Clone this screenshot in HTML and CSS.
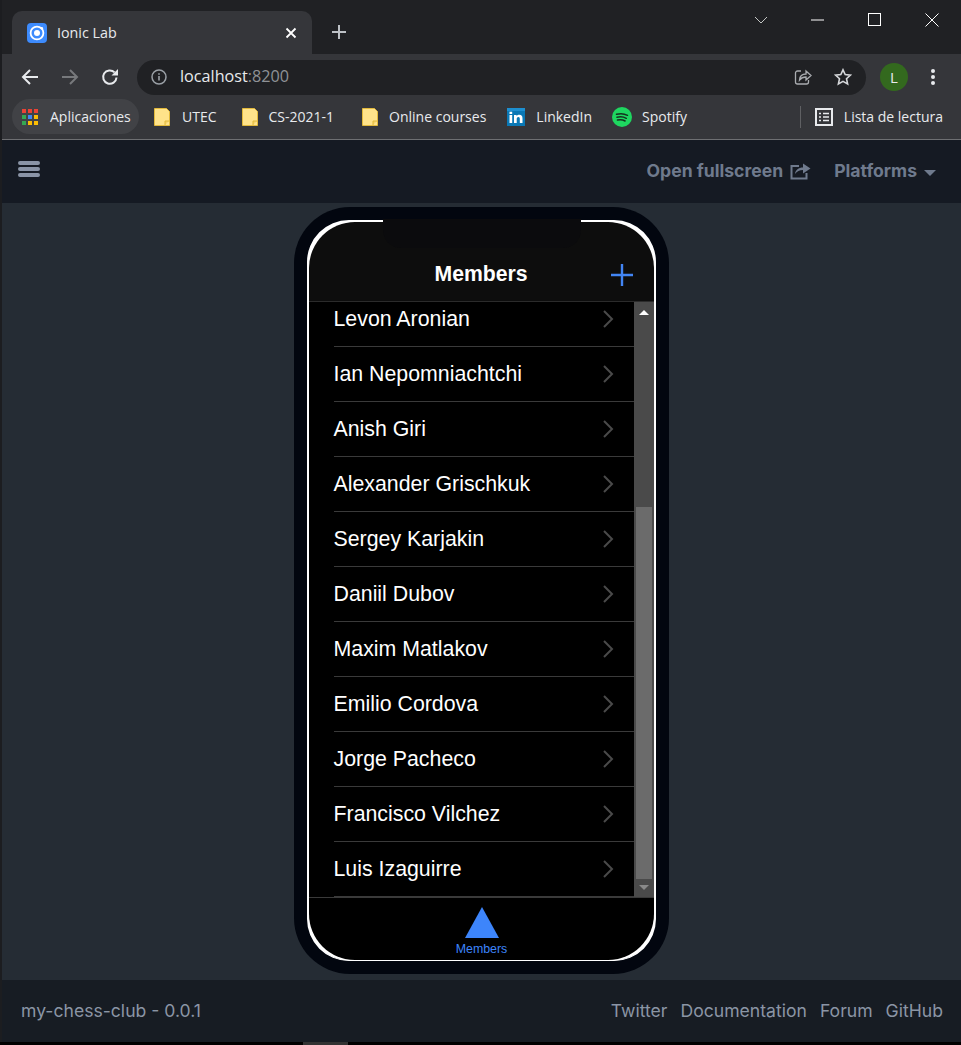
FILE: index.html
```html
<!DOCTYPE html>
<html lang="es">
<head>
    <meta charset="UTF-8">
    <title>Ionic Lab</title>
    <link rel="stylesheet" href="styles.css">
</head>
<body>
    <div class="tabstrip">
        <div class="tab">
            <svg class="favicon" width="20" height="20" viewBox="0 0 20 20">
                <rect width="20" height="20" rx="4" fill="#3d8bfd"/>
                <circle cx="10" cy="10" r="6.4" fill="none" stroke="#fff" stroke-width="1.8"/>
                <circle cx="10" cy="10" r="3" fill="#fff"/>
                <circle cx="14.8" cy="5.2" r="1.3" fill="#fff"/>
            </svg>
            <span class="tab-title">Ionic Lab</span>
            <svg class="tab-close" width="12" height="12" viewBox="0 0 12 12"><path d="M1.5 1.5l9 9M10.5 1.5l-9 9" stroke="#fff" stroke-width="1.8"/></svg>
        </div>
        <svg class="new-tab" width="16" height="16" viewBox="0 0 16 16"><path d="M8 1v14M1 8h14" stroke="#bdc1c6" stroke-width="2"/></svg>
        <div class="window-controls">
            <svg class="win-btn" width="14" height="14" viewBox="0 0 14 14"><path d="M1 4l6 6 6-6" fill="none" stroke="#c4c7c5" stroke-width="1"/></svg>
            <svg class="win-btn" width="14" height="14" viewBox="0 0 14 14"><path d="M0 7h13" stroke="#fff" stroke-width="1"/></svg>
            <svg class="win-btn" width="14" height="14" viewBox="0 0 14 14"><rect x="0.5" y="0.5" width="12" height="12" fill="none" stroke="#fff" stroke-width="1"/></svg>
            <svg class="win-btn" width="14" height="14" viewBox="0 0 14 14"><path d="M0.5 0.5l13 13M13.5 0.5l-13 13" stroke="#fff" stroke-width="1"/></svg>
        </div>
    </div>

    <div class="toolbar">
        <button class="nav-btn">
            <svg width="18" height="18" viewBox="0 0 18 18"><path d="M17 9H2M9 2L2 9l7 7" fill="none" stroke="#e8eaed" stroke-width="2"/></svg>
        </button>
        <button class="nav-btn">
            <svg width="18" height="18" viewBox="0 0 18 18"><path d="M1 9h15M9 2l7 7-7 7" fill="none" stroke="#77797c" stroke-width="2"/></svg>
        </button>
        <button class="nav-btn">
            <svg width="18" height="18" viewBox="0 0 18 18"><path d="M15.5 9.5a6.7 6.7 0 1 1-1.9-5.1" fill="none" stroke="#e8eaed" stroke-width="2"/><path d="M17 1v6.5h-6.5z" fill="#e8eaed"/></svg>
        </button>
        <div class="omnibox">
            <svg width="16" height="16" viewBox="0 0 16 16"><circle cx="8" cy="8" r="7" fill="none" stroke="#9aa0a6" stroke-width="1.5"/><path d="M8 7v4.5M8 4.2v1.6" stroke="#9aa0a6" stroke-width="1.6"/></svg>
            <span class="url">localhost<span class="url-port">:8200</span></span>
            <svg class="omni-share" width="18" height="18" viewBox="0 0 18 18"><path d="M7 3H3.500A2 2 0 0 0 1.500 5v9a2 2 0 0 0 2 2h9a2 2 0 0 0 2-2v-2" fill="none" stroke="#a9acb0" stroke-width="1.300"/><path d="M5.500 12c.3-4 3-6 6.500-6V3l5 4.500-5 4.500V9c-3 0-5 1-6.500 3z" fill="none" stroke="#a9acb0" stroke-width="1.300"/></svg>
            <svg class="omni-star" width="18" height="18" viewBox="0 0 18 18"><path d="M9 1.800l2.200 4.800 5.200.6-3.900 3.500 1.100 5.200L9 13.300l-4.600 2.600 1.100-5.200L1.600 7.200l5.200-.6z" fill="none" stroke="#d5d7da" stroke-width="1.600"/></svg>
        </div>
        <div class="avatar">L</div>
        <svg class="menu-dots" width="6" height="18" viewBox="0 0 6 18"><circle cx="3" cy="3" r="2" fill="#e8eaed"/><circle cx="3" cy="9" r="2" fill="#e8eaed"/><circle cx="3" cy="15" r="2" fill="#e8eaed"/></svg>
    </div>

    <div class="bookmarks">
        <div class="bookmark apps">
            <svg width="16" height="16" viewBox="0 0 16 16">
                <rect x="0" y="0" width="4" height="4" fill="#ea4335"/><rect x="6" y="0" width="4" height="4" fill="#ea4335"/><rect x="12" y="0" width="4" height="4" fill="#ea4335"/>
                <rect x="0" y="6" width="4" height="4" fill="#34a853"/><rect x="6" y="6" width="4" height="4" fill="#4285f4"/><rect x="12" y="6" width="4" height="4" fill="#fbbc04"/>
                <rect x="0" y="12" width="4" height="4" fill="#34a853"/><rect x="6" y="12" width="4" height="4" fill="#fbbc04"/><rect x="12" y="12" width="4" height="4" fill="#fbbc04"/>
            </svg>
            <span>Aplicaciones</span>
        </div>
        <div class="bookmark utec">
            <svg width="16" height="18" viewBox="0 0 16 18"><path d="M.5.5h12l3 3v14H.5z" fill="#ffe38a" stroke="#e2b93b"/><path d="M11 17v-4h4" fill="#f5d36b" stroke="#e2b93b"/></svg>
            <span>UTEC</span>
        </div>
        <div class="bookmark cs">
            <svg width="16" height="18" viewBox="0 0 16 18"><path d="M.5.5h12l3 3v14H.5z" fill="#ffe38a" stroke="#e2b93b"/><path d="M11 17v-4h4" fill="#f5d36b" stroke="#e2b93b"/></svg>
            <span>CS-2021-1</span>
        </div>
        <div class="bookmark courses">
            <svg width="16" height="18" viewBox="0 0 16 18"><path d="M.5.5h12l3 3v14H.5z" fill="#ffe38a" stroke="#e2b93b"/><path d="M11 17v-4h4" fill="#f5d36b" stroke="#e2b93b"/></svg>
            <span>Online courses</span>
        </div>
        <div class="bookmark linkedin">
            <svg width="18" height="18" viewBox="0 0 18 18"><rect width="18" height="18" fill="#0a78b5"/><rect y="0" width="18" height="3" fill="#1d8fd0"/><path d="M2.500 7h2.700v8H2.500zM2.500 3.800h2.700v2.200H2.500zM7 7h2.600v1.200C10.200 7.300 11.200 6.800 12.400 6.800c2.200 0 3.100 1.400 3.100 3.600V15h-2.700v-4.200c0-1.100-.4-1.800-1.400-1.800s-1.700.8-1.700 1.900V15H7z" fill="#fff"/></svg>
            <span>LinkedIn</span>
        </div>
        <div class="bookmark spotify">
            <svg width="20" height="20" viewBox="0 0 20 20"><circle cx="10" cy="10" r="10" fill="#1ed760"/><path d="M4.500 7.300c3.500-1 7.700-.8 11 1M5 10.300c3-.8 6.500-.6 9.300 1M5.500 13.100c2.500-.6 5.300-.4 7.600.9" fill="none" stroke="#14331f" stroke-width="1.500" stroke-linecap="round"/></svg>
            <span>Spotify</span>
        </div>
        <div class="reading-list">
            <svg width="18" height="18" viewBox="0 0 18 18"><rect x="1" y="1" width="16" height="16" fill="none" stroke="#e8eaed" stroke-width="2"/><path d="M4 5.500h2M8 5.500h6M4 9h2M8 9h6M4 12.500h2M8 12.500h6" stroke="#e8eaed" stroke-width="1.500"/></svg>
            <span>Lista de lectura</span>
        </div>
    </div>

    <header class="lab-header">
        <svg class="burger" width="22" height="18" viewBox="0 0 22 18"><path d="M2 3h18M2 9h18M2 15h18" stroke="#8a94a6" stroke-width="4" stroke-linecap="round"/></svg>
        <a class="lab-link">Open fullscreen
            <svg width="21" height="18" viewBox="0 0 21 18"><path d="M9 4H1.500v12.500h15V11" fill="none" stroke="#6f7a8d" stroke-width="2"/><path d="M5 12c.5-4 3.500-6.500 8-6.500V1.500L20.500 6.500 13 11.500V8c-3.500 0-6 1.200-8 4z" fill="#6f7a8d"/></svg>
        </a>
        <a class="lab-link">Platforms <span class="caret"></span></a>
    </header>

    <main class="lab-main">
        <div class="phone">
            <div class="notch"></div>
            <div class="screen">
                <div class="app-header">
                    <span></span>
                    <span class="app-title">Members</span>
                    <svg class="add-icon" width="24" height="24" viewBox="0 0 24 24"><path d="M12 1v22M1 12h22" stroke="#4285f4" stroke-width="2.400"/></svg>
                </div>
                <div class="content">
                    <ul class="member-list" id="memberList"></ul>
                    <div class="scrollbar">
                        <span class="arrow-up"></span>
                        <span class="scroll-thumb"></span>
                        <span class="arrow-down"></span>
                    </div>
                </div>
                <div class="tabbar">
                    <svg width="36" height="31" viewBox="0 0 36 31"><path d="M18 0L35 31H1z" fill="#3d85fb"/></svg>
                    <span class="tabbar-label">Members</span>
                </div>
            </div>
        </div>
    </main>

    <footer class="lab-footer">
        <span>my-chess-club - 0.0.1</span>
        <nav class="footer-links">
            <a>Twitter</a>
            <a>Documentation</a>
            <a>Forum</a>
            <a>GitHub</a>
        </nav>
    </footer>
    <div class="taskbar"><span class="taskbar-item"></span></div>

    <script>
        const members = ['Levon Aronian', 'Ian Nepomniachtchi', 'Anish Giri', 'Alexander Grischkuk', 'Sergey Karjakin', 'Daniil Dubov', 'Maxim Matlakov', 'Emilio Cordova', 'Jorge Pacheco', 'Francisco Vilchez', 'Luis Izaguirre'];
        const list = document.getElementById('memberList');
        members.forEach(name => {
            const row = document.createElement('li');
            row.className = 'member';
            row.innerHTML = '<span>' + name + '</span><svg width="12" height="20" viewBox="0 0 12 20"><path d="M2 2l8 8-8 8" fill="none" stroke="#4a4a4a" stroke-width="2"/></svg>';
            list.appendChild(row);
        });
    </script>
</body>
</html>
```

FILE: styles.css
```css
* {
    margin: 0;
    padding: 0;
    box-sizing: border-box;
}

body {
    display: flex;
    flex-direction: column;
    height: 100vh;
    padding-left: 2px;
    background: #1c1d20;
    font-family: "Open Sans", sans-serif;
    color: #fff;
    overflow: hidden;
}

svg {
    display: block;
    flex-shrink: 0;
}

/* browser chrome */
.tabstrip {
    display: flex;
    align-items: flex-end;
    height: 54px;
    padding-left: 10px;
    background: #202124;
}

.tab {
    display: flex;
    align-items: center;
    width: 300px;
    height: 43px;
    padding: 0 15px 0 15px;
    background: #35363a;
    border-radius: 10px 10px 0 0;
}

.tab-title {
    margin-left: 10px;
    font-size: 14.3px;
    color: #e8eaed;
}

.tab-close {
    margin-left: auto;
}

.new-tab {
    margin: 0 0 14px 19px;
}

.window-controls {
    display: flex;
    align-self: flex-start;
    gap: 43px;
    margin: 13px 22px 0 auto;
}

.toolbar {
    display: flex;
    align-items: center;
    height: 46px;
    padding-left: 8px;
    background: #35363a;
}

.nav-btn {
    display: flex;
    align-items: center;
    justify-content: center;
    width: 40px;
    height: 40px;
    background: none;
    border: none;
}

.omnibox {
    display: flex;
    align-items: center;
    width: 729px;
    height: 35px;
    margin-left: 7px;
    padding: 0 14px;
    background: #202124;
    border-radius: 18px;
}

.url {
    margin: 0 0 2px 13px;
    font-size: 16.2px;
    color: #e8eaed;
}

.url-port {
    color: #8f9296;
}

.omni-share {
    margin-left: auto;
}

.omni-star {
    margin-left: 22px;
}

.avatar {
    display: flex;
    align-items: center;
    justify-content: center;
    width: 28px;
    height: 28px;
    margin-left: 14px;
    border-radius: 50%;
    background: #33691e;
    font-size: 15px;
    color: #e8eaed;
}

.menu-dots {
    margin-left: 22px;
}

.bookmarks {
    display: flex;
    align-items: center;
    height: 40px;
    padding: 0 18px 6px 10px;
    background: #35363a;
    border-bottom: 1px solid #6e6f72;
    font-size: 14px;
    color: #e8eaed;
}

.bookmark {
    display: flex;
    align-items: center;
    gap: 12px;
    height: 35px;
    padding: 0 7px 0 10px;
    border-radius: 18px;
}

.apps {
    width: 127px;
    background: #414246;
    margin-right: 5px;
}

.utec {
    margin-right: 8px;
}

.cs {
    margin-right: 11px;
    gap: 11px;
}

.courses {
    margin-right: 4px;
    gap: 11px;
}

.linkedin {
    margin-right: 3px;
    gap: 11px;
}

.spotify {
    gap: 10px;
}

.reading-list {
    display: flex;
    align-items: center;
    gap: 11px;
    margin-left: auto;
    padding-left: 14px;
    height: 22px;
    border-left: 1px solid #5f6063;
}

/* ionic lab */
.lab-header {
    display: flex;
    align-items: center;
    height: 63px;
    padding: 0 25px 2px 16px;
    background: #151a23;
    font-family: Inter, sans-serif;
    font-weight: 700;
    font-size: 17.6px;
    color: #6f7a8d;
}

.burger {
    margin: 0 auto 4px 0;
}

.lab-link {
    display: flex;
    align-items: center;
    gap: 7px;
    margin-left: 23px;
}

.caret {
    width: 0;
    height: 0;
    margin-top: 4px;
    border: 6px solid transparent;
    border-top-color: #6f7a8d;
    border-bottom: none;
}

.lab-main {
    flex: 1;
    display: flex;
    justify-content: center;
    padding-top: 4px;
    background: #252c34;
}

.phone {
    position: relative;
    width: 375px;
    height: 767px;
    margin-right: 1px;
    padding: 13px;
    background: #02060f;
    border-radius: 56px;
}

.notch {
    position: absolute;
    top: 12px;
    left: 89px;
    width: 198px;
    height: 29px;
    background: #0b0b0d;
    border-radius: 0 0 18px 18px;
}

.screen {
    display: flex;
    flex-direction: column;
    height: 100%;
    background: #fff;
    border: 2px solid #fff;
    border-bottom-width: 1px;
    border-radius: 42px;
    overflow: hidden;
    font-family: "Liberation Sans", sans-serif;
}

.app-header {
    display: grid;
    grid-template-columns: 1fr auto 1fr;
    align-items: center;
    height: 80px;
    padding: 25px 20px 0 20px;
    background: #0d0d0d;
    border-bottom: 1px solid #2b2b2b;
    border-radius: 46px 46px 0 0;
    flex-shrink: 0;
}

.app-title {
    font-size: 21.2px;
    font-weight: 700;
}

.add-icon {
    justify-self: end;
    margin-top: 2px;
}

.content {
    flex: 1;
    display: flex;
    min-height: 0;
    background: #000;
}

.member-list {
    flex: 1;
    list-style: none;
    margin-top: -10px;
    padding-left: 25px;
}

.member {
    display: flex;
    align-items: center;
    justify-content: space-between;
    height: 55px;
    padding-right: 20px;
    border-bottom: 1px solid #3a3a3a;
    font-size: 21.33px;
}

.scrollbar {
    display: flex;
    flex-direction: column;
    align-items: center;
    width: 20px;
    padding-top: 8px;
    background: #4a4a4a;
}

.arrow-up {
    width: 0;
    height: 0;
    border: 5px solid transparent;
    border-bottom-color: #fff;
    border-top: none;
}

.scroll-thumb {
    width: 16px;
    height: 372px;
    margin-top: auto;
    background: #6b6b6b;
}

.arrow-down {
    width: 0;
    height: 0;
    margin: 6px 0 7px;
    border: 5px solid transparent;
    border-top-color: #8a8a8a;
    border-bottom: none;
}

.tabbar {
    display: flex;
    flex-direction: column;
    align-items: center;
    height: 63px;
    padding: 9px 0 0 1px;
    background: #000;
    border-top: 1px solid #3a3a3a;
    border-radius: 0 0 46px 46px;
    flex-shrink: 0;
}

.tabbar-label {
    margin-top: 4px;
    font-size: 12.4px;
    color: #3d85fb;
}

.lab-footer {
    display: flex;
    align-items: center;
    justify-content: space-between;
    height: 62px;
    padding: 0 18px 2px 19px;
    background: #171c23;
    font-family: Inter, sans-serif;
    font-size: 17.6px;
    color: #8b95a5;
}

.footer-links {
    display: flex;
    gap: 13px;
}

.taskbar {
    height: 3px;
    margin-left: -2px;
    background: #000;
}

.taskbar-item {
    display: block;
    width: 45px;
    height: 3px;
    margin-left: 303px;
    background: #333;
}
```
